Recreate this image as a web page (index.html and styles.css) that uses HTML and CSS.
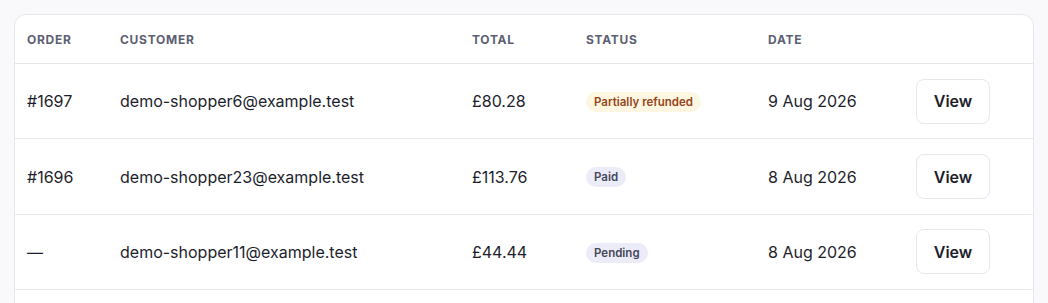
FILE: index.html
```html
<!DOCTYPE html>
<html lang="en">
<head>
    <meta charset="UTF-8" />
    <meta name="viewport" content="width=device-width, initial-scale=1.0"/>
    <title>Orders</title>
    <link rel="stylesheet" href="styles.css">
</head>
<body>
    <div class="card">
        <table class="orders">
            <colgroup>
                <col class="col-order">
                <col class="col-customer">
                <col class="col-total">
                <col class="col-status">
                <col class="col-date">
                <col class="col-action">
            </colgroup>
            <thead>
                <tr>
                    <th>Order</th>
                    <th>Customer</th>
                    <th>Total</th>
                    <th>Status</th>
                    <th>Date</th>
                    <th></th>
                </tr>
            </thead>
            <tbody>
                <tr>
                    <td>#1697</td>
                    <td>demo-shopper6@example.test</td>
                    <td>£80.28</td>
                    <td><span class="badge badge-refunded">Partially refunded</span></td>
                    <td>9 Aug 2026</td>
                    <td><button>View</button></td>
                </tr>
                <tr>
                    <td>#1696</td>
                    <td>demo-shopper23@example.test</td>
                    <td>£113.76</td>
                    <td><span class="badge badge-neutral">Paid</span></td>
                    <td>8 Aug 2026</td>
                    <td><button>View</button></td>
                </tr>
                <tr>
                    <td>—</td>
                    <td>demo-shopper11@example.test</td>
                    <td>£44.44</td>
                    <td><span class="badge badge-neutral">Pending</span></td>
                    <td>8 Aug 2026</td>
                    <td><button>View</button></td>
                </tr>
                <tr>
                    <td>#1695</td>
                    <td>demo-shopper4@example.test</td>
                    <td>£27.10</td>
                    <td><span class="badge badge-neutral">Paid</span></td>
                    <td>7 Aug 2026</td>
                    <td><button>View</button></td>
                </tr>
            </tbody>
        </table>
    </div>
</body>
</html>
```

FILE: styles.css
```css
body {
    font-family: Inter, "Noto Sans", sans-serif;
    background-color: #f9f9fb;
    color: #1d1e2c;
    margin: 0;
    padding: 14px;
}

.card {
    background-color: #ffffff;
    border: 1px solid #e6e6ef;
    border-radius: 12px;
    overflow: hidden;
}

.orders {
    width: 100%;
    border-collapse: collapse;
    table-layout: fixed;
}

.col-order { width: 93px; }
.col-customer { width: 352px; }
.col-total { width: 114px; }
.col-status { width: 182px; }
.col-date { width: 148px; }
.col-action { width: 129px; }

th {
    text-align: left;
    font-size: 12px;
    font-weight: 700;
    letter-spacing: 0.06em;
    text-transform: uppercase;
    color: #5c5f73;
    padding: 0 12px;
    height: 48px;
    border-bottom: 1px solid #e6e6ef;
}

td {
    font-size: 16px;
    padding: 14.7px 12px;
    border-bottom: 1px solid #e6e6ef;
    white-space: nowrap;
}

.badge {
    display: inline-block;
    font-size: 11.5px;
    font-weight: 600;
    line-height: 20px;
    padding: 0 8px;
    border-radius: 10px;
    vertical-align: middle;
}

.badge-refunded {
    background-color: #fdf6e1;
    color: #94461a;
}

.badge-neutral {
    background-color: #ececf8;
    color: #45475a;
}

button {
    font-family: inherit;
    font-size: 16px;
    font-weight: 600;
    color: #1d1e2c;
    background-color: #ffffff;
    border: 1px solid #e6e6ef;
    border-radius: 8px;
    width: 74px;
    height: 45px;
    vertical-align: middle;
    cursor: pointer;
}
```
